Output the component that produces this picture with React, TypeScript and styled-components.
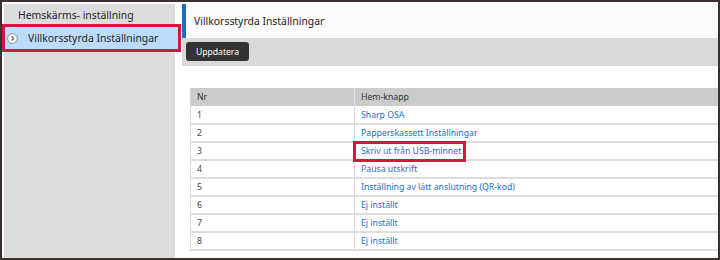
import React from 'react';
import styled, {createGlobalStyle} from "styled-components";

const GlobalStyle = createGlobalStyle`
  html, body {
    margin: 0;
    padding: 0;
    background: #ffffff;
  }
  body {
    font-family: "Noto Sans", "Open Sans", sans-serif;
  }
`

const rows = [
    {nr: 1, name: "Sharp OSA"},
    {nr: 2, name: "Papperskassett Inställningar"},
    {nr: 3, name: "Skriv ut från USB-minnet", marked: true},
    {nr: 4, name: "Pausa utskrift"},
    {nr: 5, name: "Inställning av lätt anslutning (QR-kod)"},
    {nr: 6, name: "Ej inställt"},
    {nr: 7, name: "Ej inställt"},
    {nr: 8, name: "Ej inställt"},
];

const App = () => {
    return (
        <>
            <GlobalStyle/>
            <Frame>
                <Sidebar>
                    <MenuItem>Hemskärms- inställning</MenuItem>
                    <MenuItem $active>
                        <svg width="11" height="11" viewBox="0 0 11 11">
                            <circle cx="5.5" cy="5.5" r="4.8" fill="#ffffff" stroke="#8c8c8c" strokeWidth="1"/>
                            <path d="M4.6 3.4 L6.6 5.5 L4.6 7.6" fill="none" stroke="#666666" strokeWidth="1.3"/>
                        </svg>
                        Villkorsstyrda Inställningar
                    </MenuItem>
                </Sidebar>
                <Main>
                    <TitleBar>Villkorsstyrda Inställningar</TitleBar>
                    <Toolbar>
                        <Button>Uppdatera</Button>
                    </Toolbar>
                    <Content>
                        <Table>
                            <thead>
                            <tr>
                                <Th $w={164}>Nr</Th>
                                <Th>Hem-knapp</Th>
                            </tr>
                            </thead>
                            <tbody>
                            {rows.map(r => (
                                <tr key={r.nr}>
                                    <NrCell>{r.nr}</NrCell>
                                    <LinkCell>
                                        <Link $marked={r.marked}>{r.name}</Link>
                                    </LinkCell>
                                </tr>
                            ))}
                            </tbody>
                        </Table>
                    </Content>
                </Main>
            </Frame>
        </>
    );
};

export default App;

const Frame = styled.div`
  box-sizing: border-box;
  width: 720px;
  height: 260px;
  border: 2px solid #3a302d;
  padding: 2px 0 0 2px;
  display: flex;
  gap: 7px;
  overflow: hidden;
  background: #ffffff;
`

const Sidebar = styled.div`
  width: 171px;
  flex-shrink: 0;
  background: #dcdcdc;
  display: flex;
  flex-direction: column;
`

const MenuItem = styled.div<{ $active?: boolean }>`
  height: 22px;
  display: flex;
  align-items: center;
  gap: 10px;
  padding-left: ${p => p.$active ? "2px" : "14px"};
  margin-top: ${p => p.$active ? "1px" : "0"};
  margin-left: ${p => p.$active ? "1px" : "0"};
  width: ${p => p.$active ? "173px" : "auto"};
  box-sizing: border-box;
  white-space: nowrap;
  font-size: 10.4px;
  color: #222222;
  background: ${p => p.$active ? "#bcdcfb" : "transparent"};
  outline: ${p => p.$active ? "3px solid #d3173d" : "none"};
  position: relative;
  z-index: 2;

  svg {
    flex-shrink: 0;
  }
`

const Main = styled.div`
  flex: 1;
  display: flex;
  flex-direction: column;
  min-width: 0;
`

const TitleBar = styled.div`
  height: 34px;
  border-left: 4px solid #1b6ec2;
  background: #fbfbfb;
  padding-left: 8px;
  display: flex;
  align-items: center;
  font-size: 10.4px;
  color: #222222;
`

const Toolbar = styled.div`
  height: 28px;
  background: #d9d9d9;
  padding: 4px;
  box-sizing: border-box;
  display: flex;
  align-items: flex-start;
`

const Button = styled.button`
  height: 19px;
  width: 63px;
  padding: 0;
  border: none;
  border-radius: 3px;
  background: #333333;
  color: #ffffff;
  font-family: "Noto Sans", "Open Sans", sans-serif;
  font-size: 8.6px;
`

const Content = styled.div`
  padding: 22px 0 0 8px;
`

const Table = styled.table`
  width: 100%;
  border-collapse: collapse;
  font-size: 8.7px;
  border-left: 1px solid #d6d6d6;
`

const Th = styled.th<{ $w?: number }>`
  height: 18px;
  padding: 0 0 0 6px;
  background: #cbcbcb;
  color: #333333;
  font-weight: normal;
  text-align: left;
  width: ${p => p.$w ? `${p.$w}px` : "auto"};
  border-right: ${p => p.$w ? "1px solid #e4e4e4" : "none"};
  box-sizing: border-box;
`

const NrCell = styled.td`
  height: 18px;
  padding: 0 0 0 6px;
  color: #444444;
  border-bottom: 2px solid #dddddd;
  border-right: 1px solid #d6d6d6;
  box-sizing: border-box;
`

const LinkCell = styled.td`
  height: 18px;
  padding: 0 0 0 6px;
  border-bottom: 2px solid #dddddd;
  box-sizing: border-box;
`

const Link = styled.span<{ $marked?: boolean }>`
  color: #1a6fcf;
  position: relative;

  &::after {
    content: "";
    display: ${p => p.$marked ? "block" : "none"};
    position: absolute;
    left: -8px;
    right: -5px;
    top: -4px;
    bottom: -5px;
    border: 3px solid #d3173d;
  }
`
